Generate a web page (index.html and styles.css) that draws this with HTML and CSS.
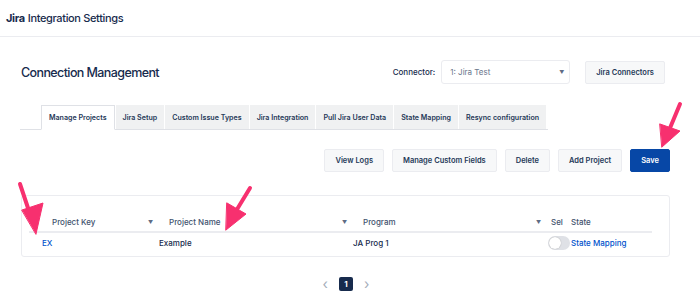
FILE: index.html
```html
<!DOCTYPE html>
<html lang="en">
<head>
    <meta charset="UTF-8">
    <title>Jira Integration Settings</title>
    <link rel="stylesheet" href="styles.css">
</head>
<body>
    <header class="page-header">
        <span class="brand">Jira</span> Integration Settings
    </header>

    <main class="content">
        <div class="top-bar">
            <h2 class="title">Connection Management</h2>
            <div class="connector">
                <label class="connector-label">Connector:</label>
                <div class="select">
                    <span>1: Jira Test</span>
                    <span class="caret">▼</span>
                </div>
                <button class="btn">Jira Connectors</button>
            </div>
        </div>

        <nav class="tabs">
            <a class="tab active">Manage Projects</a>
            <a class="tab">Jira Setup</a>
            <a class="tab">Custom Issue Types</a>
            <a class="tab">Jira Integration</a>
            <a class="tab">Pull Jira User Data</a>
            <a class="tab">State Mapping</a>
            <a class="tab">Resync configuration</a>
        </nav>

        <div class="actions">
            <button class="btn">View Logs</button>
            <button class="btn">Manage Custom Fields</button>
            <button class="btn">Delete</button>
            <button class="btn">Add Project</button>
            <button class="btn primary">Save</button>
        </div>

        <section class="card">
            <div class="grid head">
                <div class="col key">Project Key <span class="caret">▼</span></div>
                <div class="col name">Project Name <span class="caret">▼</span></div>
                <div class="col program">Program <span class="caret">▼</span></div>
                <div class="col sel">Sel</div>
                <div class="col state">State</div>
            </div>
            <div class="grid row">
                <div class="col key"><a class="link">EX</a></div>
                <div class="col name">Example</div>
                <div class="col program">JA Prog 1</div>
                <div class="col sel"><span class="toggle"></span></div>
                <div class="col state"><a class="link">State Mapping</a></div>
            </div>
        </section>

        <div class="pager">
            <span class="pager-arrow">‹</span>
            <span class="page current">1</span>
            <span class="pager-arrow">›</span>
        </div>
    </main>

    <!-- annotation arrows drawn over the screenshot -->
    <svg class="arrows" width="700" height="307" viewBox="0 0 700 307">
        <g fill="#f7306f" stroke="#f7306f" stroke-linecap="round">
            <line x1="20" y1="184" x2="30" y2="214" stroke-width="4"/>
            <polygon points="22,210 43,203 36,234" stroke-width="1" stroke-linejoin="round"/>

            <line x1="250" y1="188" x2="236" y2="211" stroke-width="4"/>
            <polygon points="227,203 246,214 226,230" stroke-width="1" stroke-linejoin="round"/>

            <line x1="680" y1="104" x2="670" y2="128" stroke-width="4"/>
            <polygon points="660,124 680,131 662,147" stroke-width="1" stroke-linejoin="round"/>
        </g>
    </svg>
</body>
</html>
```

FILE: styles.css
```css
* {
    margin: 0;
    padding: 0;
    box-sizing: border-box;
}

body {
    font-family: Inter, 'Noto Sans', sans-serif;
    color: #172b4d;
    background: white;
    width: 700px;
    height: 307px;
    overflow: hidden;
    position: relative;
}

.page-header {
    height: 37px;
    padding: 0 6px;
    display: flex;
    align-items: center;
    gap: 3px;
    font-size: 11px;
    font-weight: 500;
    letter-spacing: -0.35px;
    border-bottom: 1px solid #ebecf0;
}

.brand {
    font-weight: 700;
}

.content {
    padding: 0 30px 0 21px;
}

.top-bar {
    display: flex;
    justify-content: space-between;
    align-items: center;
    margin-top: 23px;
    height: 24px;
    padding-right: 5px;
}

.title {
    font-size: 12.5px;
    font-weight: 500;
    letter-spacing: -0.6px;
}

.connector {
    display: flex;
    align-items: center;
}

.connector-label {
    font-size: 8px;
    font-weight: 500;
    margin-right: 6px;
}

.select {
    width: 129px;
    height: 24px;
    border: 1px solid #ebecf0;
    border-radius: 3px;
    display: flex;
    align-items: center;
    justify-content: space-between;
    padding: 0 5px 0 8px;
    font-size: 8px;
    color: #6b778c;
    margin-right: 15px;
}

.caret {
    font-size: 5px;
    color: #5e6c84;
}

.btn {
    font-family: inherit;
    font-size: 7.5px;
    font-weight: 600;
    color: #253858;
    background: #f7f8f9;
    border: 1px solid #ebecf0;
    border-radius: 2px;
    height: 23px;
    padding: 0 10px;
    white-space: nowrap;
}

.btn.primary {
    background: #0747a6;
    border-color: #0747a6;
    color: white;
}

.tabs {
    display: flex;
    margin-top: 21px;
    width: 528px;
    margin-left: -1px;
    padding-left: 21px;
    border-bottom: 1px solid #dfe1e6;
}

.tab {
    height: 24px;
    display: flex;
    align-items: center;
    padding: 0 7px;
    margin-right: 1px;
    font-size: 7.1px;
    font-weight: 600;
    color: #253858;
    background: #f0f1f2;
    white-space: nowrap;
}

.tab.active {
    background: white;
    border: 1px solid #dfe1e6;
    border-bottom: 1px solid white;
    margin-bottom: -1px;
    height: 25px;
}

.actions {
    display: flex;
    justify-content: flex-end;
    gap: 8px;
    margin-top: 19px;
}

.card {
    margin-top: 23px;
    height: 62px;
    border: 1px solid #ebecf0;
    border-radius: 3px;
    padding: 17px 17px 0 7px;
}

.grid {
    display: grid;
    grid-template-columns: 117px 194px 194px 37px 1fr;
    font-size: 8px;
    align-items: center;
}

.grid.head {
    height: 20px;
    border-bottom: 2px solid #ebecf0;
    color: #42526e;
    font-weight: 500;
}

.grid.head .col {
    display: flex;
    justify-content: space-between;
    align-items: center;
    padding-left: 23px;
}

.grid.head .caret {
    margin-right: -7px;
}

.grid.head .sel {
    padding-left: 17px;
}

.grid.head .state {
    padding-left: 0;
}

.grid.row {
    height: 19px;
    font-weight: 500;
}

.grid.row .col {
    padding-left: 13px;
}

.grid.row .sel {
    padding-left: 14px;
}

.grid.row .state {
    padding-left: 0;
}

.link {
    color: #0052cc;
    font-weight: 500;
}

.toggle {
    display: block;
    width: 22px;
    height: 14px;
    border-radius: 7px;
    background: #dfe1e6;
    position: relative;
}

.toggle::before {
    content: '';
    position: absolute;
    left: 1px;
    top: 1px;
    width: 12px;
    height: 12px;
    border-radius: 50%;
    background: white;
    box-shadow: 0 0 1px rgba(0, 0, 0, 0.35);
}

.pager {
    display: flex;
    justify-content: center;
    align-items: center;
    gap: 11px;
    margin-top: 20px;
    margin-left: 1px;
}

.pager-arrow {
    font-size: 14px;
    color: #a5adba;
    line-height: 1;
}

.page.current {
    width: 14px;
    height: 14px;
    background: #172b4d;
    color: white;
    border-radius: 2px;
    font-size: 8px;
    font-weight: 700;
    display: flex;
    align-items: center;
    justify-content: center;
}

.arrows {
    position: absolute;
    left: 0;
    top: 0;
    pointer-events: none;
}
```
